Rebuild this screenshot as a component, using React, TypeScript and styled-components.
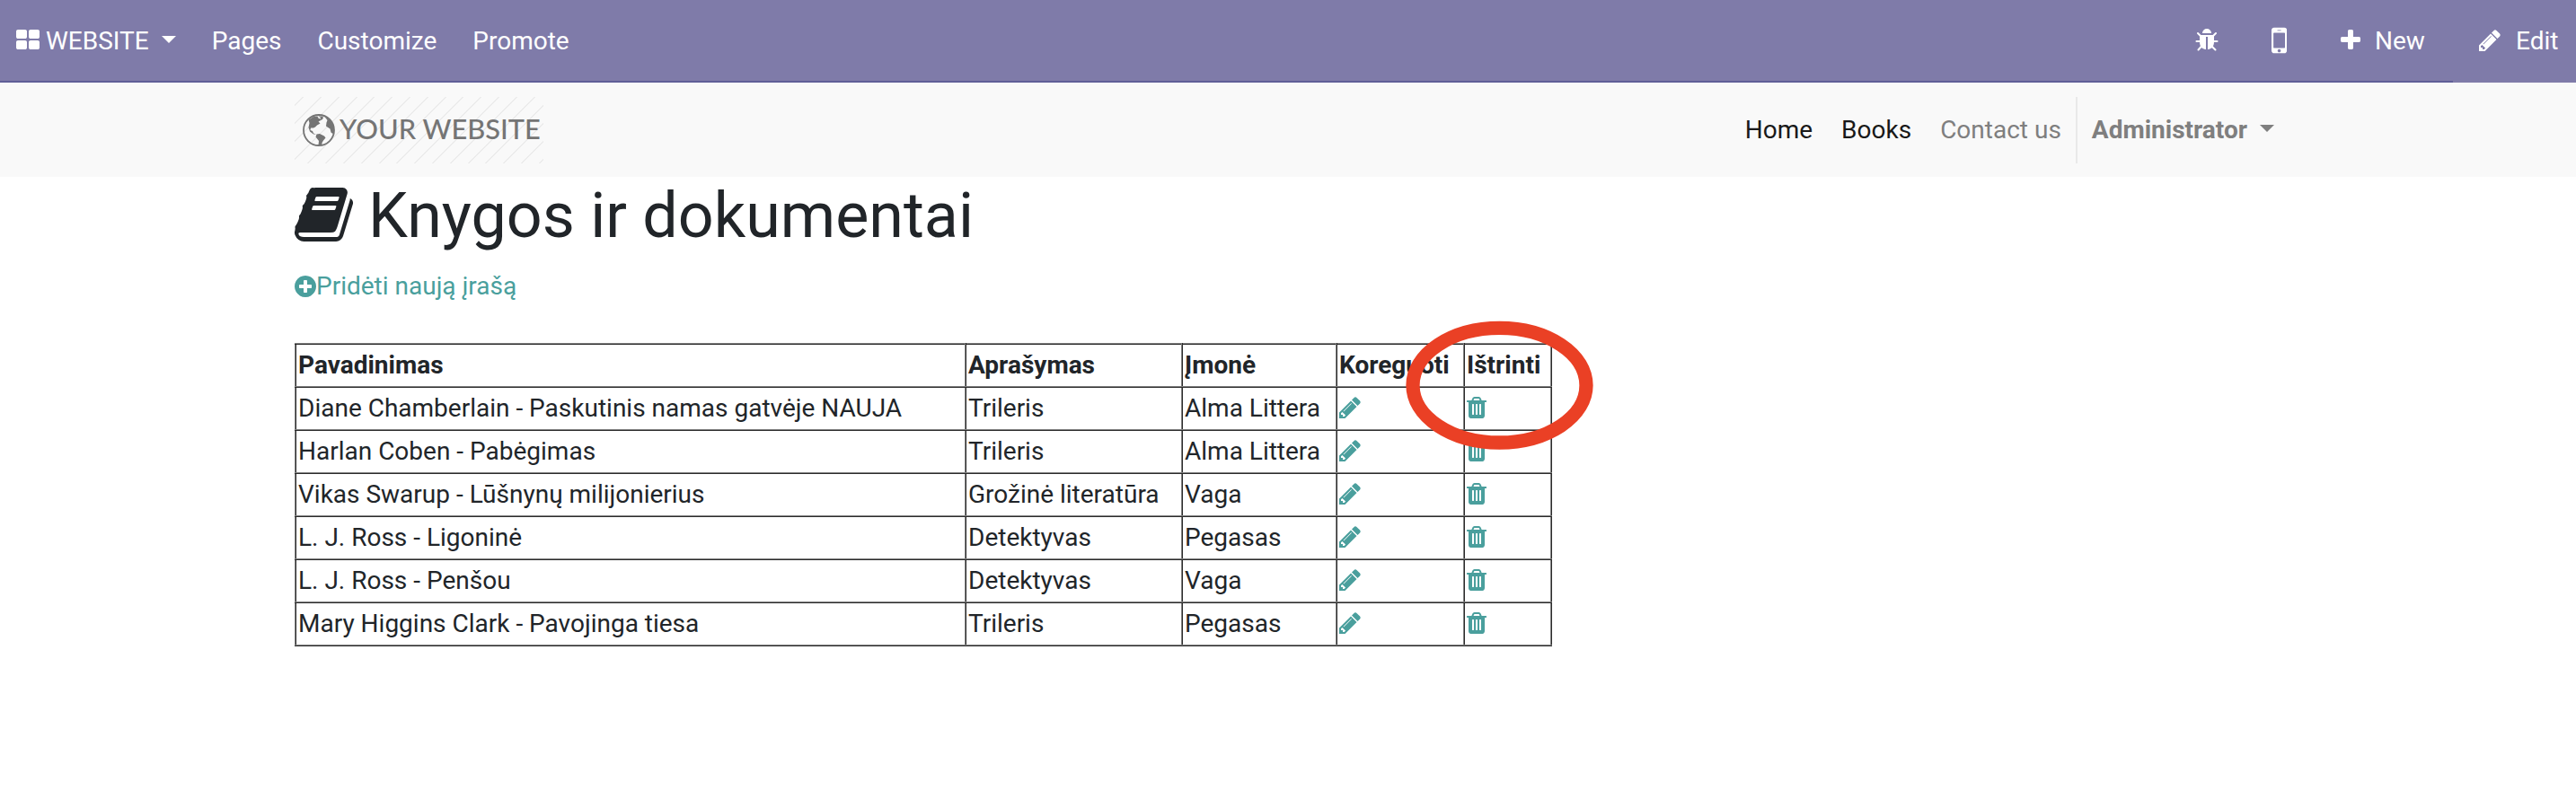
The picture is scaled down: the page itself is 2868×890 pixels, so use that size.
import React from "react";
import styled, { createGlobalStyle } from "styled-components";

const GlobalStyle = createGlobalStyle`
  *, *::before, *::after { box-sizing: border-box; }
  body {
    margin: 0;
    background: #fff;
    color: #212529;
    font: 400 28px/1.5 Roboto, sans-serif;
  }
`;

const Page = styled.div`
  position: relative;
  min-height: 890px;
  overflow: hidden;
`;

const TopBar = styled.header`
  display: flex;
  justify-content: space-between;
  height: 92px;
  color: #fff;
  background: #7f7ba9;
`;

const TopGroup = styled.nav<{ $grow?: boolean }>`
  display: flex;
  align-items: center;
  flex: ${(p) => (p.$grow ? "1" : "none")};
  padding-left: ${(p) => (p.$grow ? "17px" : "0")};
  border-bottom: 2px solid #5f5e97;
`;

const TopItem = styled.a<{ $gap?: number; $w?: number }>`
  display: flex;
  align-items: center;
  margin-left: ${(p) => p.$gap ?? 0}px;
  width: ${(p) => (p.$w ? `${p.$w}px` : "auto")};
  white-space: nowrap;
`;

const EditItem = styled.a`
  display: flex;
  align-items: center;
  width: 137px;
  padding: 0 0 2px 27px;
  white-space: nowrap;
`;

const TopLabel = styled.span<{ $gap?: number }>`
  margin-left: ${(p) => p.$gap ?? 0}px;
  padding-top: 1px;
`;

const Caret = styled.span<{ $gap: number; $up?: number }>`
  margin-left: ${(p) => p.$gap}px;
  margin-bottom: ${(p) => p.$up ?? 2}px;
  border: 8px solid transparent;
  border-top-color: currentColor;
  border-bottom: 0;
`;

const SiteBar = styled.div`
  display: flex;
  justify-content: space-between;
  height: 105px;
  padding: 16px 328px 15px;
  background: #f9f9f9;
`;

const Logo = styled.div`
  display: flex;
  align-items: center;
  width: 277px;
  height: 74px;
  padding-left: 9px;
  color: #757575;
  font: 500 30.8px/1.2 Lato, sans-serif;
  white-space: nowrap;
  background: repeating-linear-gradient(
    135deg,
    transparent 0 6.2px,
    #ececec 6.2px 7.6px,
    transparent 7.6px 14px
  );
`;

const LogoText = styled.span`
  margin: 0 0 2px 5px;
`;

const Menu = styled.nav`
  display: flex;
  align-items: center;
`;

const MenuItem = styled.a<{ $muted?: boolean }>`
  padding-right: ${(p) => (p.$muted ? "16px" : "32px")};
  color: ${(p) => (p.$muted ? "#7f7f7f" : "#191919")};
`;

const UserItem = styled.a`
  display: flex;
  align-items: center;
  height: 74px;
  padding: 0 8px 0 16px;
  color: #7f7f7f;
  font-weight: 700;
  border-left: 2px solid #e9e9e9;
`;

const Content = styled.main`
  padding: 1px 328px 0;
`;

const Title = styled.h1`
  display: flex;
  align-items: center;
  gap: 17px;
  height: 84px;
  margin: 0 0 16px;
  font-size: 70px;
  font-weight: 400;
  line-height: 84px;

  svg {
    margin-bottom: 2px;
  }
`;

const AddLink = styled.a`
  display: flex;
  align-items: center;
  height: 42px;
  margin-bottom: 42px;
  color: #4a9f9d;
`;

const Table = styled.table`
  width: 1400px;
  table-layout: fixed;
  border-collapse: collapse;
`;

const cell = `
  height: 48px;
  padding: 2px;
  line-height: 42px;
  text-align: left;
  white-space: nowrap;
  border: 2px inset #808080;
`;

const Th = styled.th`${cell} font-weight: 700;`;
const Td = styled.td`${cell}`;

const ActionLink = styled.a`
  display: flex;
  align-items: center;
  height: 42px;
  padding-bottom: 2px;
  color: #4a9f9d;
`;

const Marker = styled.svg`
  position: absolute;
  left: 1560px;
  top: 352px;
`;

const PATHS = {
  thLarge:
    "M832 1024v384q0 52-38 90t-90 38h-512q-52 0-90-38t-38-90v-384q0-52 38-90t90-38h512q52 0 90 38t38 90zm0-768v384q0 52-38 90t-90 38h-512q-52 0-90-38t-38-90v-384q0-52 38-90t90-38h512q52 0 90 38t38 90zm896 768v384q0 52-38 90t-90 38h-512q-52 0-90-38t-38-90v-384q0-52 38-90t90-38h512q52 0 90 38t38 90zm0-768v384q0 52-38 90t-90 38h-512q-52 0-90-38t-38-90v-384q0-52 38-90t90-38h512q52 0 90 38t38 90z",
  bug: "M1696 960q0 26-19 45t-45 19h-224q0 171-67 290l208 209q19 19 19 45t-19 45q-18 19-45 19t-45-19l-198-197q-5 5-15 13t-42 28.5-65 36.5-82 29-97 13v-896h-128v896q-51 0-101.5-13.5t-87-33-66-39-43.5-32.5l-15-14-183 207q-20 21-48 21-24 0-43-16-19-18-20.5-44.5t15.5-46.5l202-227q-58-114-58-274h-224q-26 0-45-19t-19-45 19-45 45-19h224v-294l-173-173q-19-19-19-45t19-45 45-19 45 19l173 173h844l173-173q19-19 45-19t45 19 19 45-19 45l-173 173v294h224q26 0 45 19t19 45zm-480-576h-640q0-133 93.5-226.5t226.5-93.5 226.5 93.5 93.5 226.5z",
  mobile:
    "M976 1408q0-33-23.5-56.5t-56.5-23.5-56.5 23.5-23.5 56.5 23.5 56.5 56.5 23.5 56.5-23.5 23.5-56.5zm208-160v-704q0-13-9.5-22.5t-22.5-9.5h-512q-13 0-22.5 9.5t-9.5 22.5v704q0 13 9.5 22.5t22.5 9.5h512q13 0 22.5-9.5t9.5-22.5zm-192-848q0-16-16-16h-160q-16 0-16 16t16 16h160q16 0 16-16zm288-16v1024q0 52-38 90t-90 38h-512q-52 0-90-38t-38-90v-1024q0-52 38-90t90-38h512q52 0 90 38t38 90z",
  plus: "M1600 736v192q0 40-28 68t-68 28h-416v416q0 40-28 68t-68 28h-192q-40 0-68-28t-28-68v-416h-416q-40 0-68-28t-28-68v-192q0-40 28-68t68-28h416v-416q0-40 28-68t68-28h192q40 0 68 28t28 68v416h416q40 0 68 28t28 68z",
  pencil:
    "M491 1536l91-91-235-235-91 91v107h128v128h107zm523-928q0-22-22-22-10 0-17 7l-542 542q-7 7-7 17 0 22 22 22 10 0 17-7l542-542q7-7 7-17zm-54-192l416 416-832 832h-416v-416zm683 96q0 53-37 90l-166 166-416-416 166-165q36-38 90-38 53 0 91 38l235 234q37 39 37 91z",
  book: "M1703 478q40 57 18 129l-275 906q-19 64-76.5 107.5t-122.5 43.5h-923q-77 0-148.5-53.5t-99.5-131.5q-24-67-2-127 0-4 3-27t4-37q1-8-3-21.5t-3-19.5q2-11 8-21t16.5-23.5 16.5-23.5q23-38 45-91.5t30-91.5q3-10 .5-30t-.5-28q3-11 17-28t17-23q21-36 42-92t25-90q1-9-2.5-32t.5-28q4-13 22-30.5t22-22.5q19-26 42.5-84.5t27.5-96.5q1-8-3-25.5t-2-26.5q2-8 9-18t18-23 17-21q8-12 16.5-30.5t15-35 16-36 19.5-32 26.5-23.5 36-11.5 47.5 5.5l-1 3q38-9 51-9h761q74 0 114 56t18 130l-274 906q-36 119-71.5 153.5t-128.5 34.5h-869q-27 0-38 15-11 16-1 43 24 70 144 70h923q29 0 56-15.5t35-41.5l300-987q7-22 5-57 38 15 59 43zm-1064 2q-4 13 2 22.5t20 9.5h608q13 0 25.5-9.5t16.5-22.5l21-64q4-13-2-22.5t-20-9.5h-608q-13 0-25.5 9.5t-16.5 22.5zm-83 256q-4 13 2 22.5t20 9.5h608q13 0 25.5-9.5t16.5-22.5l21-64q4-13-2-22.5t-20-9.5h-608q-13 0-25.5 9.5t-16.5 22.5z",
  plusCircle:
    "M1344 960v-128q0-26-19-45t-45-19h-256v-256q0-26-19-45t-45-19h-128q-26 0-45 19t-19 45v256h-256q-26 0-45 19t-19 45v128q0 26 19 45t45 19h256v256q0 26 19 45t45 19h128q26 0 45-19t19-45v-256h256q26 0 45-19t19-45zm320-64q0 209-103 385.5t-279.5 279.5-385.5 103-385.5-103-279.5-279.5-103-385.5 103-385.5 279.5-279.5 385.5-103 385.5 103 279.5 279.5 103 385.5z",
  trash:
    "M704 1376v-704q0-14-9-23t-23-9h-64q-14 0-23 9t-9 23v704q0 14 9 23t23 9h64q14 0 23-9t9-23zm256 0v-704q0-14-9-23t-23-9h-64q-14 0-23 9t-9 23v704q0 14 9 23t23 9h64q14 0 23-9t9-23zm256 0v-704q0-14-9-23t-23-9h-64q-14 0-23 9t-9 23v704q0 14 9 23t23 9h64q14 0 23-9t9-23zm-544-992h448l-48-117q-7-9-17-11h-317q-10 2-17 11zm928 32v64q0 14-9 23t-23 9h-96v948q0 83-47 143.5t-113 60.5h-832q-66 0-113-58.5t-47-141.5v-952h-96q-14 0-23-9t-9-23v-64q0-14 9-23t23-9h309l70-167q15-37 54-63t79-26h320q40 0 79 26t54 63l70 167h309q14 0 23 9t9 23z",
};

type IconName = keyof typeof PATHS;

/* x and w crop the 1792-unit em square to the glyph's advance width */
function Icon({ name, size = 28, x = 0, w = 1792 }: { name: IconName; size?: number; x?: number; w?: number }) {
  return (
    <svg width={(size * w) / 1792} height={size} viewBox={`${x} 0 ${w} 1792`} fill="currentColor" aria-hidden>
      <path d={PATHS[name]} />
    </svg>
  );
}

function Globe() {
  return (
    <svg width="36" height="36" viewBox="0 0 36 36" aria-hidden>
      <circle cx="18" cy="18" r="17" fill="none" stroke="currentColor" strokeWidth="1.8" />
      <path
        fill="currentColor"
        d="M6.500 6.500 12.500 2.800 16.500 2.500 17.500 4.800 20 5.500 19.500 3.500 17 2.500 22 2.500 23 4 22 6 20 7 17.500 8.500 19.500 10.500 16 12.500 14 14.500 12 15.500 9 15.500 8.500 18 11 19 12 21.500 15 22.500 12 22.500 8 19.500 6.500 15 7.500 10zM15.500 22.500 19 22 24 24.500 25.500 26.500 23 29.500 21.500 32 21.500 34.500 17.500 34.500 18 30 14.500 25.500zM24.500 3 30.500 6.500 34.500 13 35 20 33.500 22 31.500 20.500 30.500 16.500 26 13.500 26.500 9.500 27.500 7z"
      />
    </svg>
  );
}

const COLUMNS = [
  { title: "Pavadinimas", width: 746 },
  { title: "Aprašymas", width: 241 },
  { title: "Įmonė", width: 172 },
  { title: "Koreguoti", width: 142 },
  { title: "Ištrinti", width: 97 },
];

const BOOKS = [
  ["Diane Chamberlain - Paskutinis namas gatvėje NAUJA", "Trileris", "Alma Littera"],
  ["Harlan Coben - Pabėgimas", "Trileris", "Alma Littera"],
  ["Vikas Swarup - Lūšnynų milijonierius", "Grožinė literatūra", "Vaga"],
  ["L. J. Ross - Ligoninė", "Detektyvas", "Pegasas"],
  ["L. J. Ross - Penšou", "Detektyvas", "Vaga"],
  ["Mary Higgins Clark - Pavojinga tiesa", "Trileris", "Pegasas"],
];

export default function App() {
  return (
    <Page>
      <GlobalStyle />
      <TopBar>
        <TopGroup $grow>
          <TopItem>
            <Icon name="thLarge" />
            <TopLabel $gap={6}>WEBSITE</TopLabel>
            <Caret $gap={14} />
          </TopItem>
          <TopItem $gap={40}>
            <TopLabel>Pages</TopLabel>
          </TopItem>
          <TopItem $gap={40}>
            <TopLabel>Customize</TopLabel>
          </TopItem>
          <TopItem $gap={40}>
            <TopLabel>Promote</TopLabel>
          </TopItem>
        </TopGroup>
        <TopGroup>
          <TopItem $w={86}>
            <Icon name="bug" />
          </TopItem>
          <TopItem $w={77}>
            <Icon name="mobile" size={40} x={512} w={768} />
          </TopItem>
          <TopItem $w={125}>
            <Icon name="plus" x={192} w={1408} />
            <TopLabel $gap={16}>New</TopLabel>
          </TopItem>
        </TopGroup>
        <EditItem>
          <Icon name="pencil" />
          <TopLabel $gap={15}>Edit</TopLabel>
        </EditItem>
      </TopBar>
      <SiteBar>
        <Logo>
          <Globe />
          <LogoText>YOUR WEBSITE</LogoText>
        </Logo>
        <Menu>
          <MenuItem>Home</MenuItem>
          <MenuItem>Books</MenuItem>
          <MenuItem $muted>Contact us</MenuItem>
          <UserItem>
            Administrator
            <Caret $gap={14} $up={4} />
          </UserItem>
        </Menu>
      </SiteBar>
      <Content>
        <Title>
          <Icon name="book" size={70} x={64} w={1664} />
          Knygos ir dokumentai
        </Title>
        <AddLink>
          <Icon name="plusCircle" x={128} w={1536} />
          Pridėti naują įrašą
        </AddLink>
        <Table>
          <colgroup>
            {COLUMNS.map((c) => (
              <col key={c.title} width={c.width} />
            ))}
          </colgroup>
          <thead>
            <tr>
              {COLUMNS.map((c) => (
                <Th key={c.title}>{c.title}</Th>
              ))}
            </tr>
          </thead>
          <tbody>
            {BOOKS.map(([title, genre, company]) => (
              <tr key={title}>
                <Td>{title}</Td>
                <Td>{genre}</Td>
                <Td>{company}</Td>
                <Td>
                  <ActionLink>
                    <Icon name="pencil" x={128} w={1536} />
                  </ActionLink>
                </Td>
                <Td>
                  <ActionLink>
                    <Icon name="trash" x={192} w={1408} />
                  </ActionLink>
                </Td>
              </tr>
            ))}
          </tbody>
        </Table>
      </Content>
      <Marker width="220" height="156" viewBox="0 0 220 156" aria-hidden>
        <ellipse cx="109.5" cy="77.2" rx="96.5" ry="63.8" fill="none" stroke="#ea4025" strokeWidth="15.3" />
      </Marker>
    </Page>
  );
}
